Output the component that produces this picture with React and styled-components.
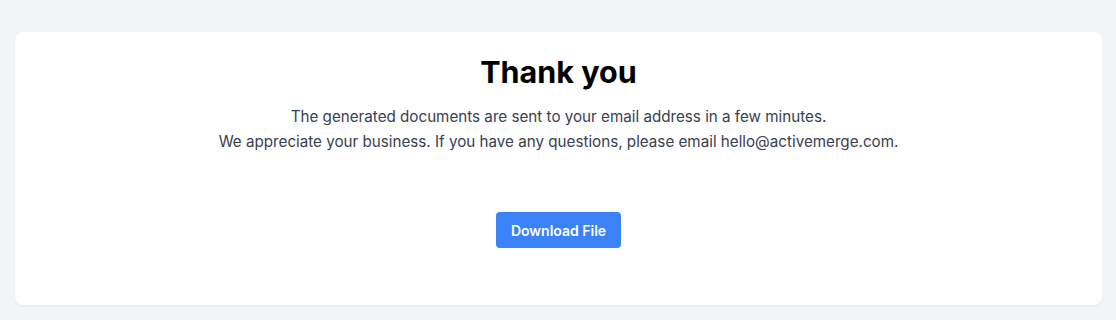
import styled, { createGlobalStyle } from "styled-components"

const GlobalStyle = createGlobalStyle`
  * { box-sizing: border-box; }
  body {
    margin: 0;
    background: #f3f4f6;
    font-family: Inter, "Noto Sans", sans-serif;
    -webkit-font-smoothing: antialiased;
  }
`

const Page = styled.div`
  padding: 32px 14px 15px 15px;
`

const Card = styled.section`
  background: #fff;
  border-radius: 8px;
  box-shadow: 0 1px 2px rgba(0, 0, 0, 0.06);
  padding: 21px 24px 57px;
  display: flex;
  flex-direction: column;
  align-items: center;
  text-align: center;
`

const Title = styled.h1`
  margin: 0;
  font-size: 30.5px;
  line-height: 38px;
  font-weight: 700;
  color: #000;
`

const Message = styled.p`
  margin: 13px 0 0;
  font-size: 15.2px;
  line-height: 25px;
  color: #374151;
`

const Button = styled.button`
  margin-top: 58px;
  height: 36px;
  padding: 0 15px;
  border: 0;
  border-radius: 4px;
  background: #3b82f6;
  color: #fff;
  font-family: inherit;
  font-size: 14px;
  font-weight: 600;
  cursor: pointer;
`

export default function App() {
  return (
    <>
      <GlobalStyle />
      <Page>
        <Card>
          <Title>Thank you</Title>
          <Message>
            The generated documents are sent to your email address in a few minutes.
            <br />
            We appreciate your business. If you have any questions, please email hello@activemerge.com.
          </Message>
          <Button>Download File</Button>
        </Card>
      </Page>
    </>
  )
}
